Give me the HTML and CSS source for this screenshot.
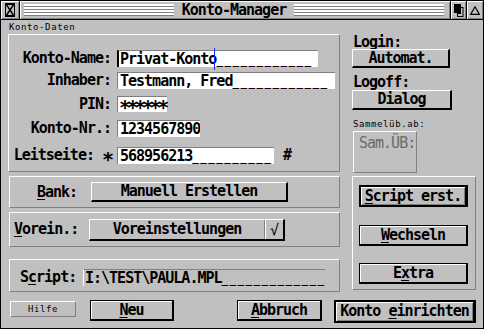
FILE: index.html
```html
<!DOCTYPE html>
<html lang="de">
<head>
<meta charset="utf-8">
<title>Konto-Manager</title>
<link rel="stylesheet" href="styles.css">
</head>
<body>
<div class="win">
  <div class="titlebar">
    <div class="tb closer">
      <svg width="10" height="14" viewBox="0 0 10 14"><rect x="0.5" y="0.5" width="9" height="13" fill="none" stroke="#000"/><path d="M1 1 L9 13 M9 1 L1 13" stroke="#000" stroke-width="1.4"/><path d="M1 1.5 H9 M1 12.5 H9" stroke="#000" stroke-width="1"/></svg>
    </div>
    <div class="tb mover">
      <div class="stripes"></div>
      <div class="title sys">Konto-Manager</div>
      <div class="stripes"></div>
    </div>
    <div class="tb fuller">
      <svg width="10" height="13" viewBox="0 0 10 13"><rect x="0" y="0" width="7" height="9" fill="#000"/><rect x="3.5" y="3.5" width="5.5" height="9" fill="#c0c0c0" stroke="#000"/><rect x="4" y="4" width="3" height="6" fill="#000"/></svg>
    </div>
    <div class="tb iconify">
      <svg width="10" height="9" viewBox="0 0 10 9"><path d="M5 0.8 L9.3 8.3 H0.7 Z" fill="none" stroke="#000" stroke-width="1.2"/></svg>
    </div>
  </div>

  <div class="content">
    <div class="leftcol">
      <div class="caption small">Konto-Daten</div>
      <div class="group main">
        <div class="frow r1"><span class="lbl sys">Konto-Name:</span><span class="field sys f-name active">Privat-Konto<span class="cursor"></span><span class="blank">____________</span></span></div>
        <div class="frow r2"><span class="lbl sys">Inhaber:</span><span class="field sys f-inh">Testmann, Fred<span class="blank">____________</span></span></div>
        <div class="frow r3"><span class="lbl sys">PIN:</span><span class="field sys f-pin"><span class="pin">******</span></span></div>
        <div class="frow r4"><span class="lbl sys">Konto-Nr.:</span><span class="field sys f-nr">1234567890</span></div>
        <div class="frow r5"><span class="lbl sys">Leitseite: <span class="star">*</span></span><span class="field sys f-leit">568956213<span class="blank">__________</span></span><span class="hash sys">#</span></div>
      </div>

      <div class="group bank">
        <span class="glbl sys"><u>B</u>ank:</span>
        <div class="btn pop sys b-bank">Manuell Erstellen</div>
      </div>

      <div class="group vorein">
        <span class="glbl sys"><u>V</u>orein.:</span>
        <div class="btn pop sys b-vor"><span class="blabel">Voreinstellungen</span><span class="chk">√</span></div>
      </div>

      <div class="group script">
        <span class="glbl sys">S<u>c</u>ript:</span>
        <span class="sfield sys">I:\TEST\PAULA.MPL<span class="blank">_____________</span></span>
      </div>
    </div>

    <div class="rightcol">
      <div class="rlabel sys r-login">Login:</div>
      <div class="btn pop sys b-auto">Automat.</div>
      <div class="rlabel sys r-logoff">Logoff:</div>
      <div class="btn pop sys b-dialog">Dialog</div>
      <div class="slabel small">Sammelüb.ab:</div>
      <div class="sambox"><span class="samtext">Sam.ÜB:</span></div>
      <div class="group actions">
        <div class="btn dflt sys b-act"><span><u>S</u>cript erst.</span></div>
        <div class="btn exit sys b-act b-wech"><span><u>W</u>echseln</span></div>
        <div class="btn exit sys b-act b-extra"><span>E<u>x</u>tra</span></div>
      </div>
    </div>

    <div class="bottom">
      <div class="btn help small">Hilfe</div>
      <div class="btn exit sys b-neu"><u>N</u>eu</div>
      <div class="btn exit sys b-abb"><u>A</u>bbruch</div>
      <div class="btn dflt sys b-konto">Konto <u>e</u>inrichten</div>
    </div>
  </div>
</div>
</body>
</html>
```

FILE: styles.css
```css
html, body {
  margin: 0;
  padding: 0;
  background: #c0c0c0;
}

.win {
  width: 484px;
  height: 329px;
  box-sizing: border-box;
  border: 1px solid #000;
  background: #c0c0c0;
  overflow: hidden;
}

.sys {
  font-family: "DejaVu Sans Mono", monospace;
  font-weight: bold;
  font-size: 15px;
  line-height: 17px;
  letter-spacing: -1px;
  color: #000;
  white-space: pre;
}

.small {
  font-family: "DejaVu Sans Mono", monospace;
  font-size: 9px;
  line-height: 11px;
  letter-spacing: 0.6px;
  color: #000;
  white-space: pre;
}

u {
  text-decoration-thickness: 1px;
  text-underline-offset: 2px;
}

/* underscores drawn as separate dashes, 8px pitch */
.blank {
  font-size: 11px;
  letter-spacing: 1.38px;
}

/* big bitmap-like asterisks */
.pin {
  display: block;
  font-size: 20px;
  line-height: 12px;
  height: 11px;
  padding-top: 4px;
  letter-spacing: -4.4px;
}
.star {
  display: inline-block;
  font-size: 20px;
  line-height: 14px;
  height: 14px;
  vertical-align: -6px;
  width: 9px;
  text-align: left;
}

/* ---------- title bar ---------- */
.titlebar {
  display: flex;
  height: 18px;
  border-bottom: 1px solid #000;
}

.tb {
  box-sizing: border-box;
  height: 18px;
  display: flex;
  align-items: center;
  justify-content: center;
  border-right: 1px solid #000;
  box-shadow: inset 1px 1px 0 #fff, inset -1px -1px 0 #808080;
}

.closer { width: 19px; }
.mover  { width: 431px; padding: 0 6px 0 4px; }
.fuller { width: 16px; }
.iconify { width: 16px; border-right: none; }

.stripes {
  flex: 1;
  height: 12px;
  background: repeating-linear-gradient(to bottom, #fff 0, #fff 2px, #808080 2px, #808080 3px);
}

.title {
  padding: 0 8px;
  line-height: 16px;
}

/* ---------- content ---------- */
.content {
  display: grid;
  grid-template-columns: 332px 124px;
  column-gap: 12px;
  padding-left: 7px;
}

.leftcol, .rightcol {
  display: flex;
  flex-direction: column;
}

.caption {
  height: 12px;
  margin-top: 2px;
  padding-left: 1px;
  line-height: 10px;
}

.group {
  box-sizing: border-box;
  border: 1px solid;
  border-color: #fff #808080 #808080 #fff;
}

.main {
  height: 138px;
  width: 332px;
}

.frow {
  display: flex;
  align-items: flex-start;
  height: 17px;
}
.r1 { margin-top: 15px; }
.r2 { margin-top: 5px; }
.r3 { margin-top: 7px; }
.r4 { margin-top: 7px; }
.r5 { margin-top: 10px; }

.lbl {
  width: 102px;
  text-align: right;
  margin-right: 6px;
}

.field {
  box-sizing: border-box;
  height: 17px;
  background: #fff;
  border-top: 1px solid #808080;
  border-left: 1px solid #808080;
  padding-left: 2px;
  overflow: hidden;
}
.field.active { border-left: 2px solid #000; padding-left: 1px; overflow: visible; }
.f-name { width: 201px; }
.f-inh  { width: 218px; }
.f-pin  { width: 50px; height: 16px; padding-left: 1px; overflow: visible; }
.f-nr   { width: 83px; }
.f-leit { width: 157px; }

.hash {
  margin-left: 9px;
}

.cursor {
  display: inline-block;
  position: relative;
  width: 0;
  height: 17px;
  vertical-align: top;
}
.cursor::after {
  content: "";
  position: absolute;
  left: -2px;
  top: -3px;
  width: 1px;
  height: 22px;
  background: #1030ff;
}

.bank, .vorein, .script {
  display: flex;
  align-items: center;
  margin-left: 1px;
  width: 331px;
}

.bank {
  margin-top: 4px;
  height: 32px;
  padding-left: 27px;
}
.bank .glbl { width: 54px; }

.vorein {
  margin-top: 4px;
  height: 35px;
  padding-left: 4px;
}
.vorein .glbl { width: 75px; }

.script {
  margin-top: 12px;
  height: 33px;
  padding-left: 10px;
}
.script .glbl { width: 63px; margin-top: 3px; }

.sfield {
  box-sizing: border-box;
  width: 242px;
  height: 17px;
  margin-top: 3px;
  border-top: 1px solid #808080;
  border-left: 1px solid #fff;
  padding-left: 1px;
  overflow: hidden;
}

/* ---------- buttons ---------- */
.btn {
  box-sizing: border-box;
  display: flex;
  align-items: center;
  justify-content: center;
  background: #c0c0c0;
}

.pop {
  border-top: 1px solid #fff;
  border-left: 1px solid #fff;
  border-right: 2px solid #000;
  border-bottom: 2px solid #000;
}

.exit {
  border: 1px solid #000;
  border-right-width: 2px;
  border-bottom-width: 2px;
  box-shadow: inset 1px 1px 0 #fff;
}

.dflt {
  border: 2px solid #000;
  border-right-width: 3px;
  box-shadow: inset 1px 1px 0 #fff, inset -1px -1px 0 #808080;
}

.help {
  border-top: 1px solid #fff;
  border-left: 1px solid #fff;
  border-right: 1px solid #808080;
  border-bottom: 1px solid #808080;
}

.b-bank { width: 197px; height: 20px; }

.b-vor {
  width: 196px;
  height: 22px;
  justify-content: flex-start;
}
.b-vor .blabel {
  flex: 1;
  text-align: center;
}
.b-vor .chk {
  box-sizing: border-box;
  width: 19px;
  height: 100%;
  border-left: 1px solid #808080;
  box-shadow: inset 1px 0 0 #fff;
  text-align: center;
  line-height: 20px;
  font-weight: normal;
}

/* ---------- right column ---------- */
.rlabel {
  line-height: 13px;
  height: 13px;
  padding-left: 1px;
}
.r-login { margin-top: 16px; }
.b-auto { width: 98px; height: 19px; }
.r-logoff { margin-top: 8px; }
.b-dialog { width: 100px; height: 20px; margin-top: 1px; }

.slabel {
  margin-top: 9px;
  padding-left: 1px;
  height: 11px;
}

.sambox {
  box-sizing: border-box;
  width: 64px;
  height: 42px;
  margin-top: 1px;
  margin-left: 1px;
  border: 1px solid;
  border-color: #fff #808080 #808080 #fff;
  padding: 2px 0 0 5px;
}

.samtext {
  font-family: "DejaVu Sans Mono", monospace;
  font-size: 15px;
  line-height: 17px;
  letter-spacing: -1px;
  color: #6a6a6a;
  white-space: pre;
}

.actions {
  margin-top: 3px;
  width: 124px;
  height: 114px;
  display: flex;
  flex-direction: column;
  padding-left: 6px;
}

.b-act {
  width: 109px;
  height: 22px;
  margin-top: 8px;
}
.b-wech { margin-top: 18px; height: 21px; }
.b-extra { margin-top: 17px; height: 21px; }

/* ---------- bottom row ---------- */
.bottom {
  grid-column: 1 / 3;
  display: flex;
  align-items: flex-start;
  margin-top: 8px;
}

.help  { width: 66px; height: 16px; margin-left: 2px; margin-top: 1px; }
.b-neu { width: 84px; height: 21px; margin-left: 14px; }
.b-abb { width: 85px; height: 21px; margin-left: 63px; }
.b-konto { width: 142px; height: 23px; margin-left: 12px; }
```
